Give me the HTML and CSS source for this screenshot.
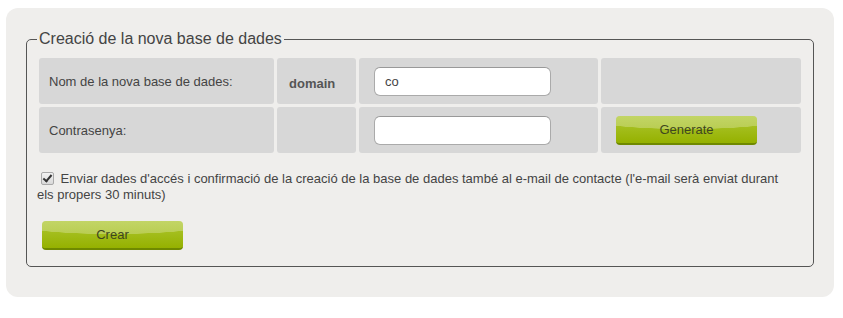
FILE: index.html
```html
<!DOCTYPE html>
<html lang="ca">
<head>
    <meta charset="UTF-8">
    <meta name="viewport" content="width=device-width, initial-scale=1.0">
    <title>Creació de la nova base de dades</title>
    <link rel="stylesheet" href="styles.css">
</head>
<body>
    <div class="panel">
        <fieldset class="db-form">
            <legend>Creació de la nova base de dades</legend>

            <!-- Name / password rows -->
            <div class="form-grid">
                <div class="cell label">Nom de la nova base de dades:</div>
                <div class="cell prefix">domain</div>
                <div class="cell field"><input type="text" value="co"></div>
                <div class="cell"></div>

                <div class="cell label">Contrasenya:</div>
                <div class="cell"></div>
                <div class="cell field"><input type="password"></div>
                <div class="cell field"><button class="btn" type="button">Generate</button></div>
            </div>

            <p class="notify">
                <input type="checkbox" checked> Enviar dades d'accés i confirmació de la creació de la base de dades també al e-mail de contacte (l'e-mail serà enviat durant els propers 30 minuts)
            </p>

            <button class="btn btn-create" type="submit">Crear</button>
        </fieldset>
    </div>
</body>
</html>
```

FILE: styles.css
```css
body {
    margin: 0;
    font-family: "Liberation Sans", Arial, sans-serif;
    font-size: 13px;
    color: #444;
    background: #fff;
}
.panel {
    width: 788px;
    margin: 8px 0 0 6px;
    padding: 22px 20px 30px 20px;
    background: #efeeec;
    border-radius: 12px;
}
.db-form {
    margin: 0;
    padding: 10px 10px 16px 10px;
    border: 1px solid #555;
    border-radius: 5px;
}
.db-form legend {
    padding: 0 2px;
    font-size: 16px;
    color: #444;
}
.form-grid {
    display: grid;
    grid-template-columns: 235px 79px 239px 200px;
    grid-template-rows: 46px 46px;
    gap: 3px;
    margin: 0 2px;
}
.cell {
    display: flex;
    align-items: center;
    background: #d7d7d7;
    border-radius: 3px;
}
.label {
    padding-left: 10px;
}
.prefix {
    padding: 5px 0 0 12px;
    font-weight: bold;
    color: #555;
}
.field {
    padding-left: 15px;
}
.field input {
    box-sizing: border-box;
    width: 177px;
    height: 29px;
    padding: 0 10px;
    border: 1px solid #aaa;
    border-top-color: #999;
    border-radius: 6px;
    background: #fff;
    font-family: inherit;
    font-size: 13px;
    color: #444;
}
.btn {
    box-sizing: border-box;
    width: 141px;
    height: 29px;
    padding: 0;
    border: none;
    border-bottom: 2px solid #6f8900;
    border-radius: 4px;
    background:
        radial-gradient(ellipse 110% 70% at 50% 0%, rgba(255, 255, 255, 0.25) 68%, rgba(255, 255, 255, 0) 70%),
        linear-gradient(#aec732, #95b100);
    font-family: inherit;
    font-size: 13px;
    color: #3e4620;
}
.notify {
    margin: 18px 16px 18px 0;
    line-height: 16px;
}
.notify input {
    -webkit-appearance: none;
    appearance: none;
    position: relative;
    width: 13px;
    height: 13px;
    margin: 0 3px 0 4px;
    vertical-align: -2px;
    border: 1px solid #a9a9a9;
    border-radius: 2px;
    background: linear-gradient(#f2f2f2, #d9d9d9);
}
.notify input:checked::after {
    content: "";
    position: absolute;
    left: 3px;
    top: 0;
    width: 3px;
    height: 7px;
    border: solid #333;
    border-width: 0 2px 2px 0;
    transform: rotate(40deg);
}
.btn-create {
    margin-left: 5px;
}
```
